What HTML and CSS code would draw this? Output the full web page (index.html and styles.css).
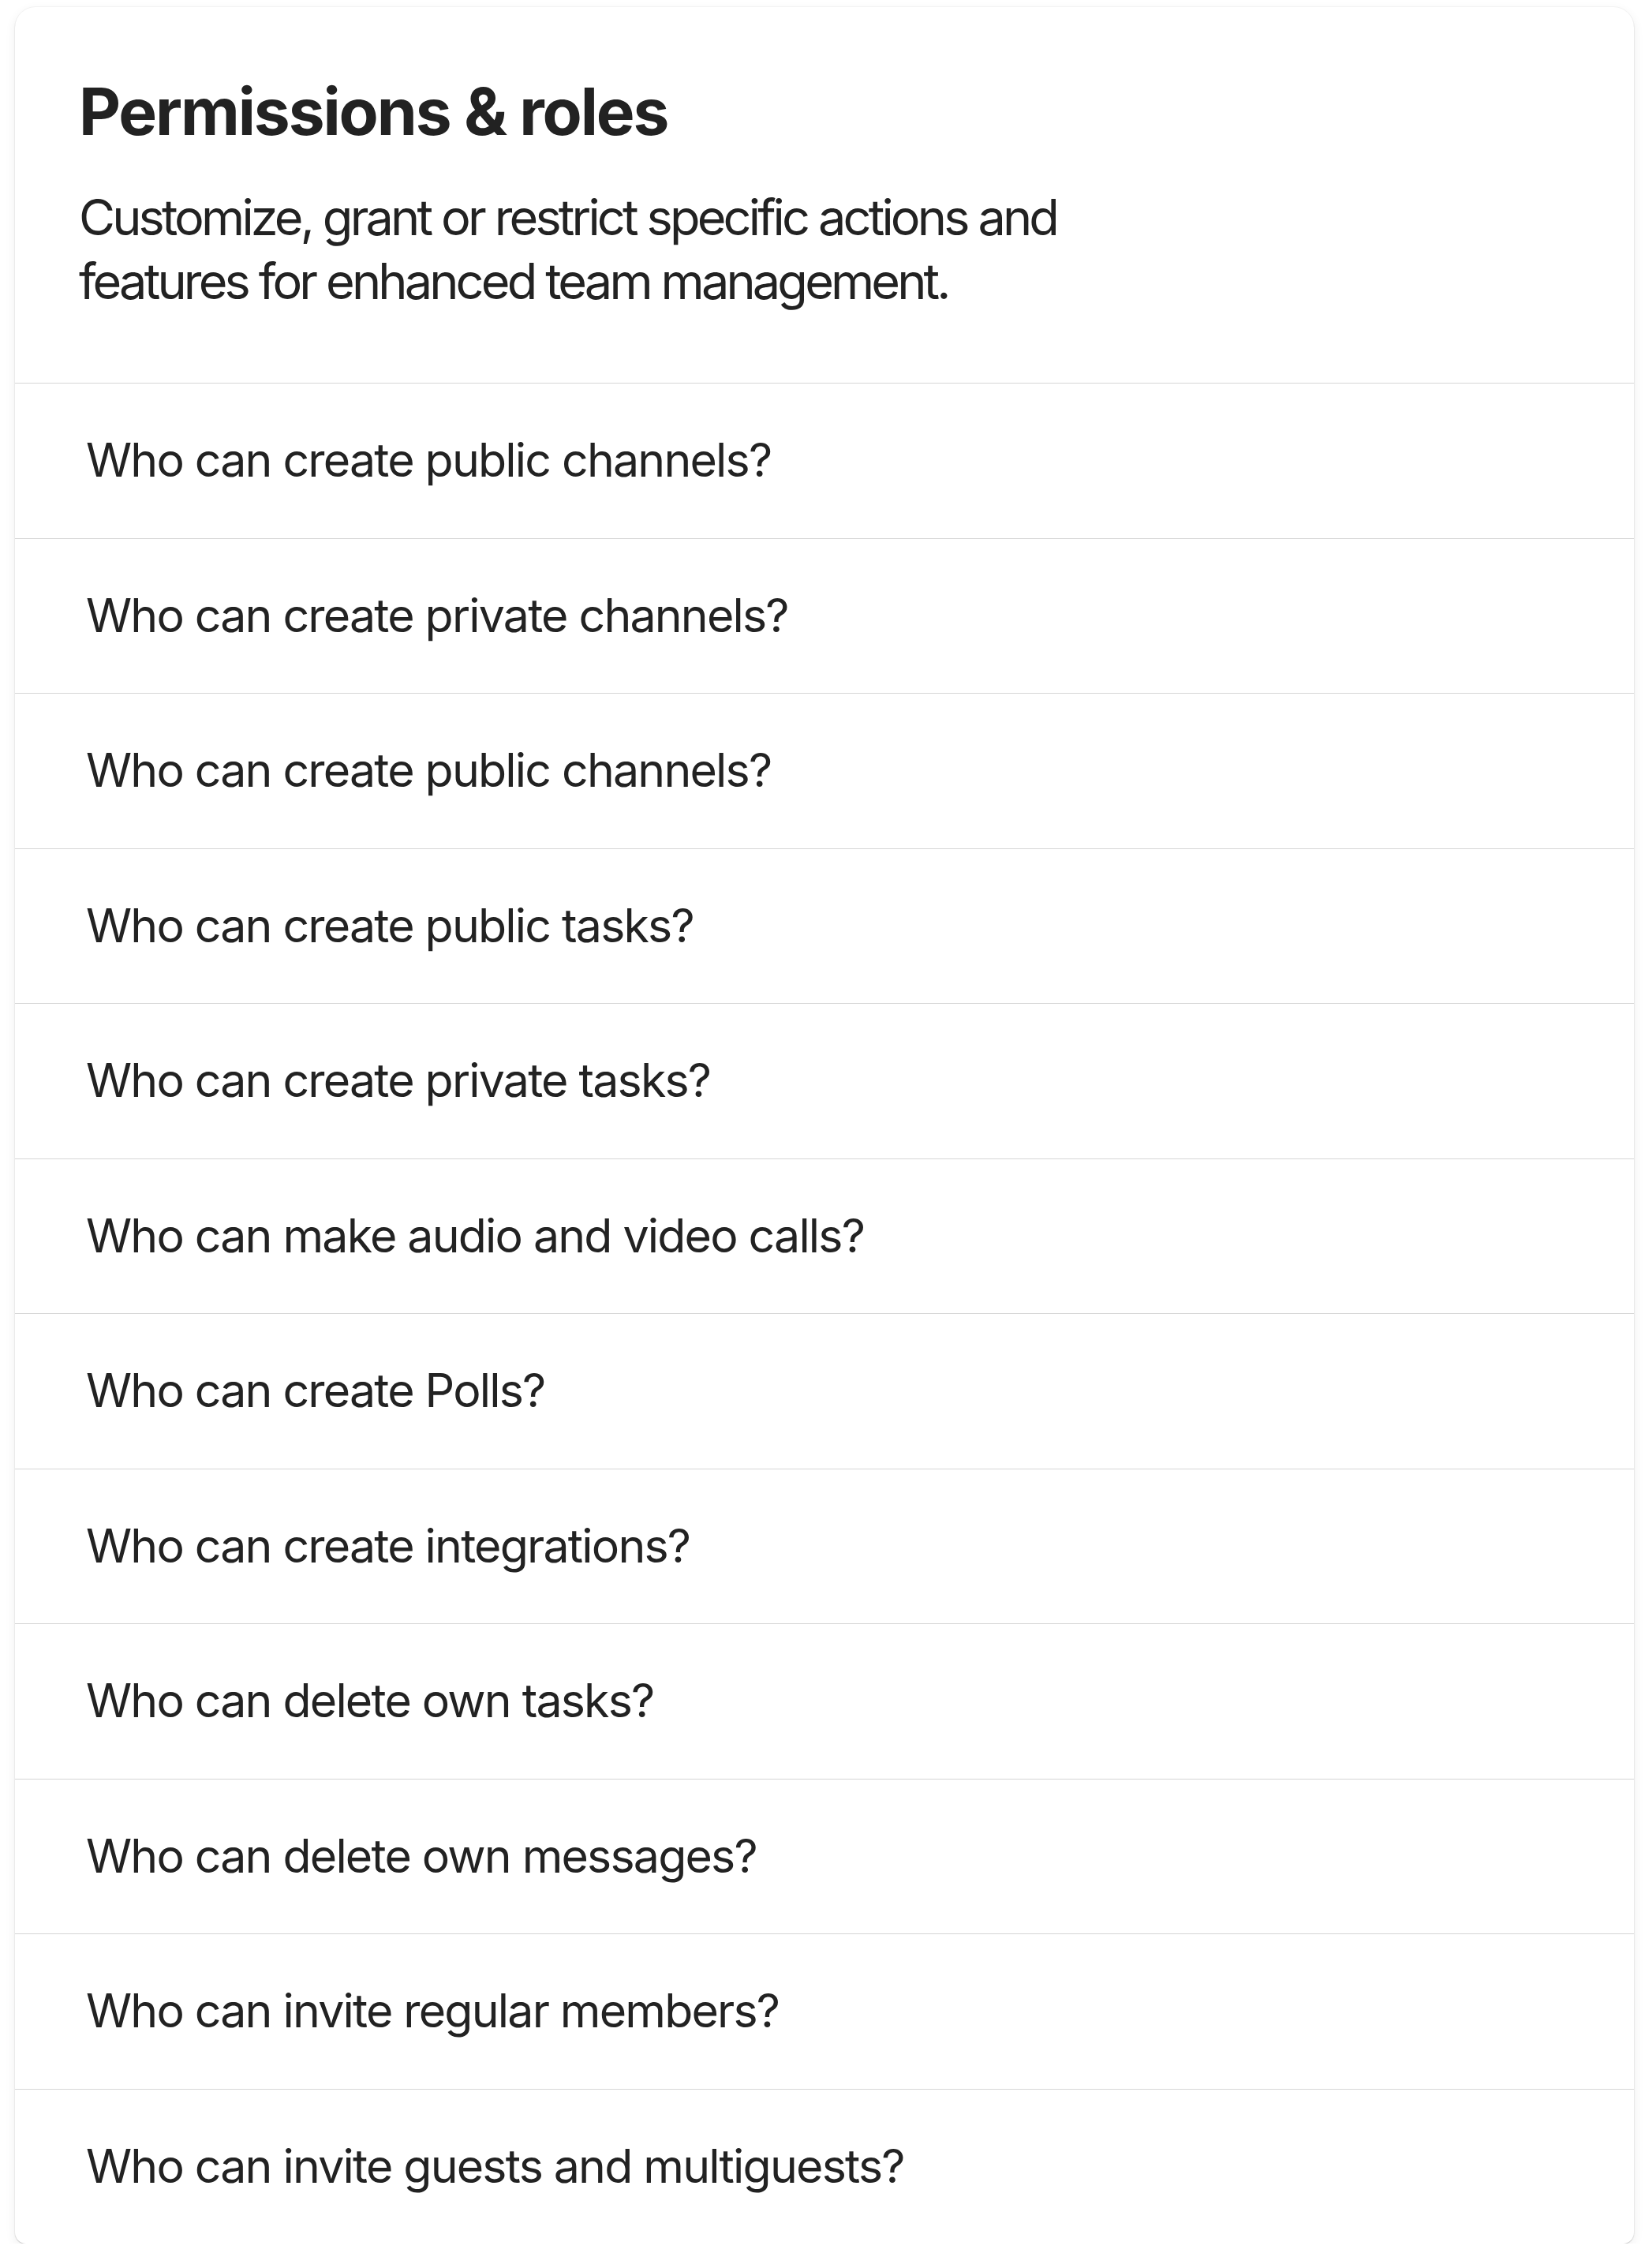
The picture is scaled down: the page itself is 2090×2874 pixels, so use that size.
FILE: index.html
```html
<!DOCTYPE html>
<html lang="en">
<head>
<meta charset="utf-8">
<title>Permissions &amp; roles</title>
<link rel="stylesheet" href="styles.css">
</head>
<body>
<section class="card">
  <header class="card-head">
    <h1 class="title">Permissions &amp; roles</h1>
    <p class="subtitle">Customize, grant or restrict specific actions and<br>features for enhanced team management.</p>
  </header>
  <ul class="perm-list">
    <li class="perm-row">Who can create public channels?</li>
    <li class="perm-row">Who can create private channels?</li>
    <li class="perm-row">Who can create public channels?</li>
    <li class="perm-row">Who can create public tasks?</li>
    <li class="perm-row">Who can create private tasks?</li>
    <li class="perm-row">Who can make audio and video calls?</li>
    <li class="perm-row">Who can create Polls?</li>
    <li class="perm-row">Who can create integrations?</li>
    <li class="perm-row">Who can delete own tasks?</li>
    <li class="perm-row">Who can delete own messages?</li>
    <li class="perm-row">Who can invite regular members?</li>
    <li class="perm-row">Who can invite guests and multiguests?</li>
  </ul>
</section>
</body>
</html>
```

FILE: styles.css
```css
* { box-sizing: border-box; }

html, body {
  margin: 0;
  padding: 0;
  background: #ffffff;
}

body {
  font-family: Inter, "Noto Sans", "Liberation Sans", sans-serif;
  color: #222222;
  padding: 9px 19px 0 19px;
}

.card {
  width: 2052px;
  background: #ffffff;
  border-radius: 26px 26px 14px 14px;
  box-shadow:
    0 0 0 1px rgba(0, 0, 0, 0.035),
    0 1px 1px rgba(0, 0, 0, 0.16),
    0 4px 14px rgba(0, 0, 0, 0.07);
  overflow: hidden;
}

.card-head {
  padding: 84px 80px 88px 81px;
}

.title {
  margin: 0;
  font-size: 82px;
  line-height: 98px;
  font-weight: 700;
  letter-spacing: -2.1px;
  color: #222222;
}

.subtitle {
  margin: 44px 0 0 0;
  font-size: 63px;
  line-height: 81px;
  font-weight: 400;
  letter-spacing: -3.85px;
  color: #222222;
}

.perm-list {
  list-style: none;
  margin: 0;
  padding: 0;
}

.perm-row {
  display: flex;
  align-items: center;
  height: 196.5px;
  padding: 0 90px;
  border-top: 1px solid #d6d6d6;
  font-size: 59px;
  line-height: 1.2;
  letter-spacing: -1.8px;
  color: #222222;
}
```
